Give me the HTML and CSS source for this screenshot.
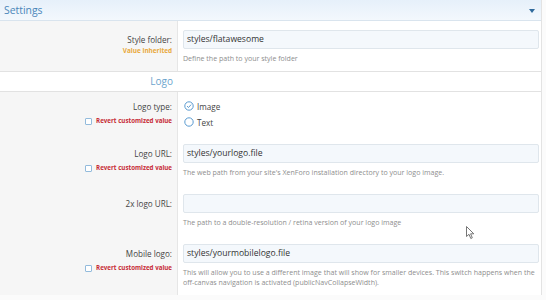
FILE: index.html
```html
<!DOCTYPE html>
<html lang="en">
<head>
    <meta charset="UTF-8">
    <title>Style Properties - Settings</title>
    <link rel="stylesheet" href="styles.css">
</head>
<body>
    <div class="panel">
        <div class="panel-header">
            <span class="panel-title">Settings</span>
            <span class="toggle"></span>
        </div>

        <div class="row">
            <div class="row-label">
                <div class="label">Style folder:</div>
                <div class="hint inherited">Value inherited</div>
            </div>
            <div class="row-value">
                <div class="input">styles/flatawesome</div>
                <div class="explain">Define the path to your style folder</div>
            </div>
        </div>

        <div class="subheading">
            <span>Logo</span>
        </div>

        <div class="group">
            <div class="row">
                <div class="row-label row-label-radio">
                    <div class="label">Logo type:</div>
                    <div class="hint revert"><span class="check"></span>Revert customized value</div>
                </div>
                <div class="row-value row-value-radio">
                    <div class="radio checked">
                        <svg width="10" height="10" viewBox="0 0 10 10">
                            <circle cx="5" cy="5" r="4.2" fill="#fff" stroke="#5b9bd0" stroke-width="1"/>
                            <path d="M3 5.1 L4.5 6.5 L7.1 3.6" fill="none" stroke="#5b9bd0" stroke-width="1"/>
                        </svg>
                        <span>Image</span>
                    </div>
                    <div class="radio">
                        <svg width="10" height="10" viewBox="0 0 10 10">
                            <circle cx="5" cy="5" r="4.2" fill="#fff" stroke="#5b9bd0" stroke-width="1"/>
                        </svg>
                        <span>Text</span>
                    </div>
                </div>
            </div>

            <div class="row">
                <div class="row-label">
                    <div class="label">Logo URL:</div>
                    <div class="hint revert"><span class="check"></span>Revert customized value</div>
                </div>
                <div class="row-value">
                    <div class="input">styles/yourlogo.file</div>
                    <div class="explain">The web path from your site's XenForo installation directory to your logo image.</div>
                </div>
            </div>

            <div class="row">
                <div class="row-label">
                    <div class="label">2x logo URL:</div>
                </div>
                <div class="row-value">
                    <div class="input"></div>
                    <div class="explain">The path to a double-resolution / retina version of your logo image</div>
                </div>
            </div>

            <div class="row">
                <div class="row-label">
                    <div class="label">Mobile logo:</div>
                    <div class="hint revert"><span class="check"></span>Revert customized value</div>
                </div>
                <div class="row-value">
                    <div class="input">styles/yourmobilelogo.file</div>
                    <div class="explain">This will allow you to use a different image that will show for smaller devices. This switch happens when the <span class="nowrap">off-canvas</span> navigation is activated (publicNavCollapseWidth).</div>
                </div>
            </div>
        </div>

        <!-- mouse pointer captured in the screenshot -->
        <svg class="pointer" width="9" height="14" viewBox="0 0 9 14">
            <path d="M0.5 0.5 L0.5 10.5 L3 8.3 L4.8 12.5 L6.3 11.8 L4.6 7.8 L7.8 7.8 Z" fill="#fff" stroke="#666" stroke-width="0.9" stroke-linejoin="round"/>
        </svg>
    </div>
</body>
</html>
```

FILE: styles.css
```css
body {
    margin: 0;
    font-family: 'Open Sans', 'Noto Sans', sans-serif;
    color: #3c3c3c;
    background-color: #fbfbfb;
}
.panel {
    position: relative;
    width: 541px;
    border-right: 1px solid #e3e3e3;
    background-color: #fff;
}
.panel-header {
    display: flex;
    align-items: center;
    justify-content: space-between;
    height: 21px;
    padding: 0 6px 0 4px;
    background: linear-gradient(to bottom, #e6f0fa, #f3f8fd);
    border-bottom: 1px solid #d9e4ee;
    box-sizing: border-box;
}
.panel-title {
    font-size: 10.4px;
    color: #4a86b9;
}
.toggle {
    width: 0;
    height: 0;
    border-left: 3.5px solid transparent;
    border-right: 3.5px solid transparent;
    border-top: 4px solid #2f6a9c;
    margin-top: 1px;
}
.row {
    display: grid;
    grid-template-columns: 178px 1fr;
}
.row-label {
    background-color: #f6f6f6;
    border-right: 1px solid #e6e6e6;
    text-align: right;
    padding: 9px 5px 8px 0;
}
.label {
    font-size: 8.1px;
    line-height: 19px;
    color: #444;
}
.hint {
    font-size: 6.2px;
    line-height: 10px;
    font-weight: 700;
}
.inherited {
    color: #e9a93c;
    font-size: 6.4px;
    margin-top: -3px;
}
.revert {
    color: #c72a35;
    display: flex;
    align-items: center;
    justify-content: flex-end;
}
.check {
    display: inline-block;
    width: 5px;
    height: 5px;
    border: 1px solid #93bbdc;
    border-radius: 1px;
    margin-right: 4px;
    background-color: #fff;
}
.row-value {
    padding: 9px 2px 8px 5px;
}
.input {
    height: 19px;
    line-height: 17px;
    padding: 0 3px;
    font-size: 8.6px;
    color: #333;
    background-color: #f4f8fc;
    border: 1px solid #dfe6ec;
    border-radius: 2px;
    box-sizing: border-box;
}
.explain {
    margin-top: 4px;
    font-size: 7.05px;
    line-height: 10px;
    color: #8e8e8e;
}
.nowrap {
    white-space: nowrap;
}
.subheading {
    display: grid;
    grid-template-columns: 178px 1fr;
    height: 21px;
    border-top: 1px solid #e2e2e2;
    border-bottom: 1px solid #e2e2e2;
    box-sizing: border-box;
}
.subheading span {
    text-align: right;
    padding-right: 5px;
    font-size: 10px;
    line-height: 19px;
    color: #6ba4cd;
}
.row-label-radio {
    padding-top: 6px;
}
.row-label-radio .label {
    line-height: 18px;
}
.row-value-radio {
    padding-top: 6px;
    padding-bottom: 5px;
}
.radio {
    display: flex;
    align-items: center;
    gap: 3px;
    height: 16px;
    font-size: 8.1px;
    color: #444;
    padding-left: 1px;
}
.pointer {
    position: absolute;
    left: 466px;
    top: 226px;
}
```
